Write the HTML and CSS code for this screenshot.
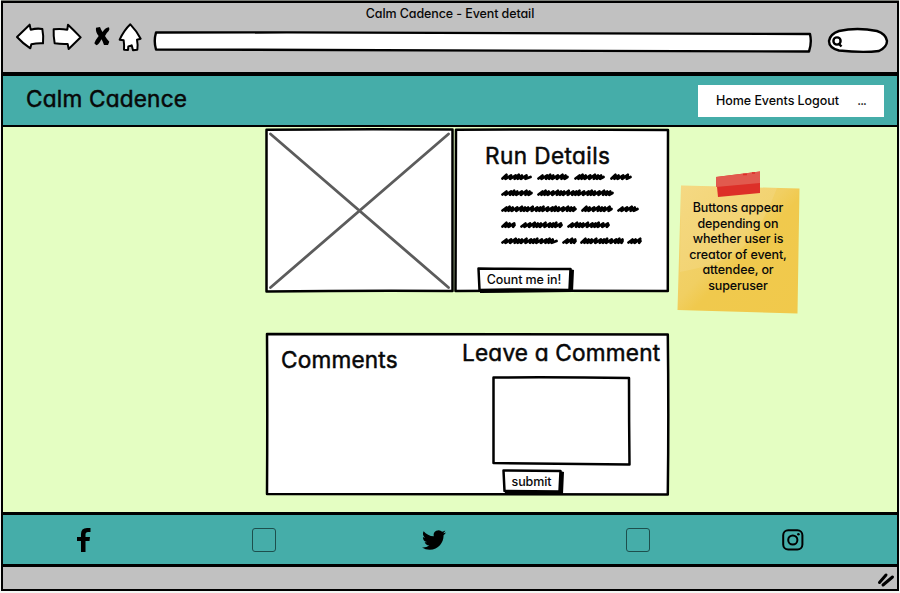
FILE: index.html
```html
<!DOCTYPE html>
<html lang="en">
<head>
<meta charset="utf-8">
<title>Calm Cadence - Event detail</title>
<link rel="stylesheet" href="styles.css">
</head>
<body>
<div class="window">
  <div class="chrome">
    <div class="chrome-title">Calm Cadence - Event detail</div>
    <div class="toolbar">
      <svg class="icon-back" viewBox="0 0 90 84"><path d="M6 42 L44 5 L47 20 Q66 15 82 18 Q86 38 84 61 Q66 60 49 64 L46 76 Q22 60 6 42Z"/></svg>
      <svg class="icon-forward" viewBox="0 0 90 84"><path d="M5 19 Q25 16 46 20 L48 5 Q65 21 86 43 L50 78 L47 63 Q27 64 8 61 Q4 40 5 19Z"/></svg>
      <svg class="icon-stop" viewBox="0 0 48 60"><path d="M6 5 L18 3 Q22 14 26 18 Q32 6 45 4 Q48 10 44 15 Q36 22 33 30 Q40 42 46 47 L42 57 L30 57 Q26 44 22 40 Q17 54 7 58 L1 52 Q4 42 14 30 Q4 18 6 5Z"/></svg>
      <svg class="icon-home" viewBox="0 0 72 84"><path d="M37 4 Q56 24 68 47 L57 50 Q60 65 58 80 L45 82 L41 67 L31 70 L30 81 L18 80 Q19 65 17 52 L5 50 Q18 22 37 4Z"/></svg>
      <svg class="address" viewBox="0 0 660 24"><path d="M3 2.500 Q330 2 657 4 Q659 13 656 21.500 Q330 21 3 19.500 Q.5 11 3 2.500Z"/></svg>
      <svg class="search" viewBox="0 0 62 28"><path d="M12 4 Q30 0 50 4 Q59 7 60 14 Q60 20 52 24 Q36 26 12 23.500 Q2 21 2 14 Q3 7 12 4Z"/><circle cx="10" cy="14" r="3.600"/><path d="M12 17 L14.500 19.500"/></svg>
    </div>
  </div>

  <header class="site-header">
    <h1>Calm Cadence</h1>
    <nav><span>Home Events Logout</span><span class="more">...</span></nav>
  </header>

  <main>
    <div class="content">
      <div class="event">
        <section class="photo">
          <svg viewBox="0 0 189 165"><path class="frame" d="M1.500 1.800 Q95 1 187.500 1.600 L187.500 163 Q95 162.500 1.500 163.500Z"/><path class="cross" d="M5.500 6 L183.500 159.500 M183.500 6 L5.500 159.500"/></svg>
        </section>
        <section class="details">
          <svg class="outline" viewBox="0 0 215 165"><path class="frame" d="M2 1.700 Q110 1 214 2 L213.800 163 Q110 162.500 1.500 163 Q1.500 80 2 1.700Z"/></svg>
          <h2>Run Details</h2>
          <svg class="scribble" id="scribble" viewBox="0 0 150 80"></svg>
          <button class="join"><svg viewBox="0 0 97 26"><path class="shade" d="M3 22 L92 22 L93 2 L97 3 L96 25 L3 26Z"/><path class="frame" d="M1.500 1.500 Q48 2 93.500 2 L92.500 23 Q48 22 2.500 23Z"/></svg><span>Count me in!</span></button>
        </section>
      </div>
      <div class="comments">
        <svg class="outline" viewBox="0 0 404 163"><path class="frame" d="M2 1 Q220 .5 402.800 1.500 Q403.800 80 402.800 161.500 Q220 162 2 161 Q2.500 80 2 1Z"/></svg>
        <section class="comment-list"><h2>Comments</h2></section>
        <section class="comment-form">
          <h2>Leave a Comment</h2>
          <svg class="textarea" viewBox="0 0 139 90"><path class="frame" d="M1.500 1.500 Q70 1 137 2 Q137 45 137.500 88.500 Q70 88 1.500 87 Q1.500 45 1.500 1.500Z"/></svg>
          <button class="submit"><svg viewBox="0 0 62 25"><path class="shade" d="M3 21 L58 21 L58 2 L62 3 L61 25 L3 25Z"/><path class="frame" d="M1.500 1.500 L58.500 2 L57.500 22.500 L2.500 22Z"/></svg><span>submit</span></button>
        </section>
      </div>
    </div>
    <aside class="note">
      <svg viewBox="0 0 124 144"><defs><linearGradient id="paper" x1="0" y1="0" x2="1" y2="1"><stop offset="0" stop-color="#f4d576"/><stop offset=".45" stop-color="#f1cf62"/><stop offset=".55" stop-color="#f0c94d"/><stop offset="1" stop-color="#f1c94b"/></linearGradient></defs><path fill="url(#paper)" d="M4 15.500 Q60 17 122.500 18.500 L120.500 143.500 L.5 140Z"/><path fill="#fff" opacity=".1" d="M4 15.500 L100 18 Q86 54 74 68 Q58 92 3 102Z"/><path fill="#dd2f28" d="M39 7 L83 1.500 L83 23 L41 27Z"/><path fill="#e15a4e" d="M39 7 L83 1.500 L83 13 L39 17Z"/><path stroke="#dd2f28" stroke-width="1.500" d="M66 4.500h4M75 3h3"/></svg>
      <p>Buttons appear<br>depending on<br>whether user is<br>creator of event,<br>attendee, or<br>superuser</p>
    </aside>
  </main>

  <footer>
    <svg class="facebook" viewBox="0 0 14 24"><path d="M4 24V13H0V9H4V6Q4 0 10 0H13.500V4H11Q8.500 4 8.500 6.500V9H13L12.500 13H8.500V24Z"/></svg>
    <i class="box"></i>
    <svg class="twitter" viewBox="0 0 24 24"><path d="M23.953 4.570a10 10 0 01-2.825.775 4.958 4.958 0 002.163-2.723c-.951.555-2.005.959-3.127 1.184a4.920 4.920 0 00-8.384 4.482C7.690 8.095 4.067 6.130 1.640 3.162a4.822 4.822 0 00-.666 2.475c0 1.710.870 3.213 2.188 4.096a4.904 4.904 0 01-2.228-.616v.060a4.923 4.923 0 003.946 4.827 4.996 4.996 0 01-2.212.085 4.936 4.936 0 004.604 3.417 9.867 9.867 0 01-6.102 2.105c-.390 0-.779-.023-1.170-.067a13.995 13.995 0 007.557 2.209c9.053 0 13.998-7.496 13.998-13.985 0-.210 0-.420-.015-.630A9.935 9.935 0 0024 4.590z"/></svg>
    <i class="box"></i>
    <svg class="instagram" viewBox="0 0 22 22"><rect x="1.200" y="1.200" width="19.200" height="19.200" rx="5"/><circle cx="10.800" cy="11" r="4.600"/><circle class="dot" cx="16.400" cy="5.300" r="1.300"/></svg>
  </footer>
  <div class="status"><svg viewBox="0 0 16 14"><path d="M1.500 9.500 L8 2 M5 12 L14.500 4"/></svg></div>
</div>
<script src="script.js"></script>
</body>
</html>
```
FILE: styles.css
```css
* { box-sizing: border-box; }
body {
  margin: 0;
  background: #f4f6f3;
  color: #080808;
  font: 500 12.5px/16px Inter, "Open Sans", sans-serif;
  font-feature-settings: "cv11";
  letter-spacing: -.1px;
}
h1, h2, p { margin: 0; }
h1, h2 { font-weight: 400; font-size: 22.6px; line-height: 28px; letter-spacing: .2px; white-space: nowrap; -webkit-text-stroke: .5px #080808; }
svg { display: block; flex: none; overflow: visible; }
.window {
  width: 898px;
  height: 590px;
  margin: 1px;
  border: 2px solid #000;
  box-shadow: 0 -1px #7c7f7a;
  display: flex;
  flex-direction: column;
}
.chrome { height: 69px; background: #c1c1c1; }
.chrome-title { height: 22px; line-height: 22px; text-align: center; }
.toolbar { display: flex; align-items: flex-start; padding-left: 12px; }
.toolbar svg { fill: #fff; stroke: #000; stroke-linejoin: round; }
.toolbar .icon-back { width: 30px; height: 28px; margin-top: -2px; stroke-width: 6; }
.toolbar .icon-forward { width: 30px; height: 28px; margin: -2px 0 0 7px; stroke-width: 6; }
.toolbar .icon-stop { width: 16px; height: 20px; margin: 1px 0 0 12px; fill: #000; stroke: none; }
.toolbar .icon-home { width: 24px; height: 28px; margin: -2px 0 0 8px; stroke-width: 6; }
.toolbar .address { width: 660px; height: 24px; margin: 5px 0 0 11px; stroke-width: 2.4; }
.toolbar .search { width: 62px; height: 28px; margin: 2px 0 0 14px; stroke-width: 2.4; }
.site-header {
  height: 55px;
  margin: 0 -2px 0 -2px;
  padding: 0 14px 0 23px;
  background: #45ada9;
  border: solid #000;
  border-width: 4px 2px 2px;
  border-radius: 2px;
  display: flex;
  align-items: center;
  justify-content: space-between;
}
.site-header h1 { margin-top: -3px; }
nav {
  width: 186px;
  height: 32px;
  margin-right: -1px;
  padding: 0 18px;
  background: #fff;
  letter-spacing: -.05px;
  display: flex;
  align-items: center;
  justify-content: space-between;
}
.more { letter-spacing: -.9px; }
main {
  height: 385px;
  padding: 1px 0 0 262px;
  background: #e4fec2;
  display: flex;
  gap: 8px;
}
.content { width: 404px; display: flex; flex-direction: column; gap: 40px; }
.event { height: 165px; display: flex; }
.photo, .photo svg { width: 189px; height: 165px; }
.frame { fill: #fff; stroke: #000; stroke-width: 2.5; stroke-linejoin: round; }
.cross { fill: none; stroke: #5c5c5c; stroke-width: 2.8; stroke-linecap: round; }
.details { position: relative; width: 215px; height: 165px; padding: 14px 0 0 23px; }
.outline { position: absolute; inset: 0; width: 100%; height: 100%; }
h2, .scribble, button { position: relative; }
.details h2 { margin-left: 8px; letter-spacing: .4px; }
.scribble { width: 150px; height: 80px; margin: 0 0 0 24px; fill: none; stroke: #000; stroke-width: 2.7; stroke-linecap: round; stroke-linejoin: round; }
button { display: block; padding: 0; border: 0; background: none; color: inherit; font: inherit; font-feature-settings: inherit; letter-spacing: inherit; text-align: center; }
button svg { position: absolute; inset: 0; width: 100%; height: 100%; }
button span { position: relative; }
.shade { fill: #000; }
.join { width: 97px; height: 26px; margin-top: 17px; padding-right: 3px; }
.comments { position: relative; height: 163px; display: flex; }
.comment-list { width: 196px; padding: 13px 0 0 16px; }
.comment-form { width: 208px; padding: 6px 0 0 1px; }
.textarea { position: relative; width: 139px; height: 90px; margin: 9px 0 0 30px; }
.submit { width: 62px; height: 25px; margin: 3px 0 0 40px; padding-right: 3px; }
.note { position: relative; width: 124px; height: 144px; margin-top: 42px; }
.note svg { position: absolute; inset: 0; width: 124px; height: 144px; }
.note p { position: relative; padding: 30px 2px 0 0; line-height: 15.6px; text-align: center; white-space: nowrap; }
footer {
  height: 55px;
  margin: 0 -2px;
  padding-left: 74px;
  background: #45ada9;
  border: solid #000;
  border-width: 3px 2px;
  border-radius: 2px;
  display: flex;
  align-items: center;
}
.facebook { width: 14px; height: 24px; }
.box { width: 24px; height: 24px; border: 1.5px solid #1d4f4d; border-radius: 3px; }
.facebook + .box { margin-left: 161px; }
.twitter { width: 24px; height: 24px; margin-left: 146px; }
.twitter + .box { margin-left: 180px; }
.instagram { width: 22px; height: 22px; margin-left: 132px; fill: none; stroke: #000; stroke-width: 2; }
.instagram .dot { fill: #000; stroke: none; }
.status { height: 22px; background: #c1c1c1; display: flex; justify-content: flex-end; padding: 6px 3px 0 0; }
.status svg { width: 16px; height: 14px; fill: none; stroke: #000; stroke-width: 3; stroke-linecap: round; }
```
FILE: script.js
```js
// Placeholder copy: each pair is the start and end of a scribbled word.
const lines = [
  [[0, 31], [36, 68], [73, 104], [109, 131]],
  [[0, 32], [36, 113]],
  [[0, 76], [80, 112], [116, 138]],
  [[0, 15], [19, 62], [66, 109]],
  [[0, 57], [61, 76], [79, 123], [126, 141]]
];
let d = "";
lines.forEach((words, row) => {
  const y = 7 + row * 16;
  words.forEach(([from, to], w) => {
    let x = from + 1.5;
    d += `M${x} ${y + 1.5}`;
    let i = row + w;
    while (x < to - 5.5) {
      const rise = i % 3 === 0 ? 2.2 : 1.5;
      d += `L${x + 4} ${y - rise}L${x + 3} ${y + 1.8}`;
      x += i % 4 < 2 ? 4.6 : 3.1;
      i++;
    }
    d += `L${to - 1.5} ${y}`;
  });
});
document.getElementById("scribble").innerHTML = `<path d="${d}"/>`;
```
